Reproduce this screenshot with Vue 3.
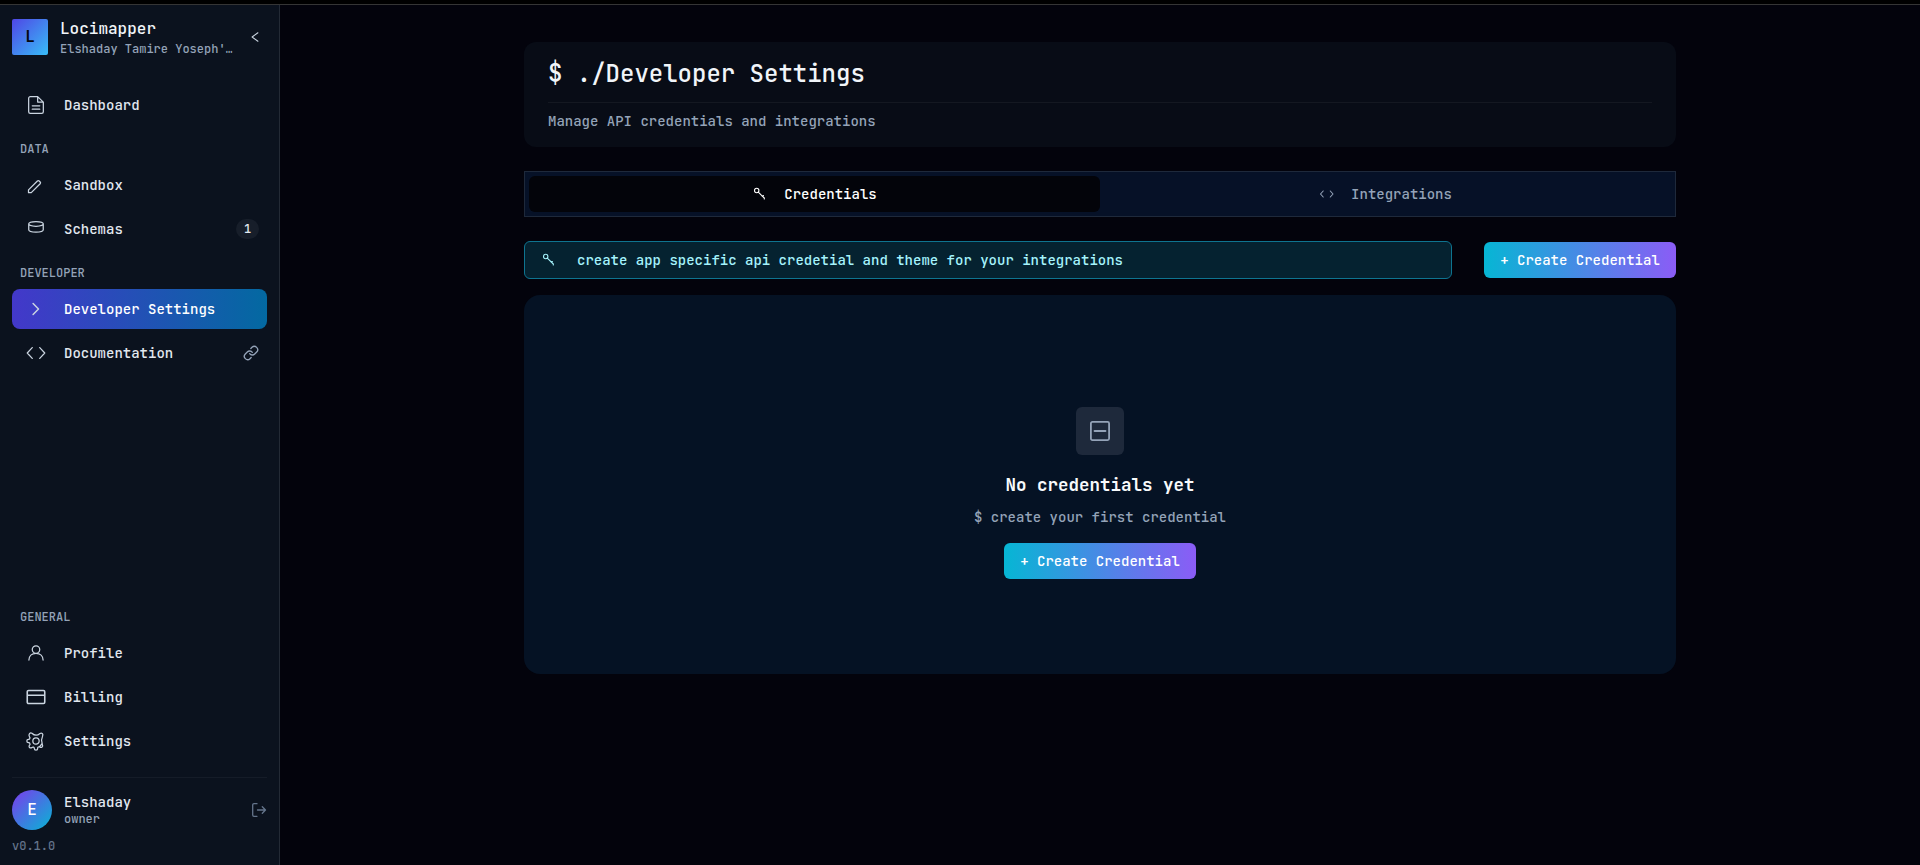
<script setup>
const sections = [
  { title: '', items: [{ icon: 'doc', label: 'Dashboard' }] },
  { title: 'DATA', items: [{ icon: 'pencil', label: 'Sandbox' }, { icon: 'db', label: 'Schemas', badge: '1' }] },
  { title: 'DEVELOPER', items: [{ icon: 'chev', label: 'Developer Settings', active: true }, { icon: 'code', label: 'Documentation', link: true }] },
  { title: 'GENERAL', bottom: true, items: [{ icon: 'user', label: 'Profile' }, { icon: 'card', label: 'Billing' }, { icon: 'gear', label: 'Settings' }] },
]
const icons = {
  doc: 'M14 2H5.200a2 2 0 0 0-2 2v16a2 2 0 0 0 2 2h13.600a2 2 0 0 0 2-2V8.500zM14 2v6.500h6.800M7.500 13h9M7.500 17h9',
  pencil: 'M3 21.200v-3.300L13.700 7.200a1.500 1.500 0 0 1 2.100 0l1.200 1.200a1.500 1.500 0 0 1 0 2.100L6.300 21.200z',
  db: 'M3.300 5.800c0-1.600 3.800-2.800 8.700-2.800s8.700 1.200 8.700 2.800-3.800 2.900-8.700 2.900-8.700-1.300-8.700-2.900zM3.300 5.800v7c0 1.600 3.800 2.900 8.700 2.900s8.700-1.300 8.700-2.900v-7',
  chev: 'M8.500 5.500 15 12l-6.500 6.500',
  code: 'M7.500 5.500 1.500 12l6 6.500M16.500 5.500l6 6.500-6 6.500',
  user: 'M16.500 7.800a4.500 4.500 0 1 1-9 0 4.500 4.500 0 0 1 9 0zM3.500 20.500c0-5 3.500-8.200 8.500-8.200s8.500 3.200 8.500 8.200',
  card: 'M3 4.200h18a1.500 1.500 0 0 1 1.500 1.500v12.600a1.500 1.500 0 0 1-1.500 1.500H3a1.500 1.500 0 0 1-1.500-1.500V5.700A1.500 1.500 0 0 1 3 4.200zM1.500 9.800h21',
  gear: 'M15.800 12a3.800 3.800 0 1 1-7.600 0 3.800 3.800 0 0 1 7.600 0zM19.400 15l-3 3.800a1.900 1.900 0 1 0 3.300-2zM16.400 19.200a1.650 1.650 0 0 0-2.400 1.700V21a2 2 0 1 1-4 0v-.09A1.650 1.650 0 0 0 9 19.400a1.650 1.650 0 0 0-1.820.33l-.06.06a2 2 0 1 1-2.830-2.830l.06-.06A1.650 1.650 0 0 0 4.680 15a1.650 1.650 0 0 0-1.510-1H3a2 2 0 1 1 0-4h.09A1.650 1.650 0 0 0 4.600 9a1.650 1.650 0 0 0-.33-1.820l-.06-.06C2.300 3.800 5.200 1.500 7.040 2.600l.06.06c2.900 2.800 6.900 2.700 9.720.3 2.100-1 4 .3 3.200 2.600l-.4 1.600c-1.500 2.900-1.500 5-.22 7.840',
}
</script>

<template>
  <div class="page">
    <div class="strip"></div>
    <div class="body">
      <aside class="side">
        <header class="brand">
          <div class="logo">L</div>
          <div class="brand-text">
            <div class="name">Locimapper</div>
            <div class="org">Elshaday Tamire Yoseph'…</div>
          </div>
          <svg class="collapse" viewBox="0 0 12 12"><path d="M8.900 1.800 3.100 6l5.800 4.200" /></svg>
        </header>
        <nav class="nav">
          <section v-for="s in sections" :key="s.title" :class="{ bottom: s.bottom }">
            <h4 v-if="s.title">{{ s.title }}</h4>
            <div class="items">
              <a v-for="i in s.items" :key="i.label" class="item" :class="{ active: i.active }">
                <svg class="ico" :class="i.icon" viewBox="0 0 24 24"><path :d="icons[i.icon]" /></svg>
                <span class="label">{{ i.label }}</span>
                <span v-if="i.badge" class="badge">{{ i.badge }}</span>
                <svg v-if="i.link" class="link" viewBox="0 0 24 24"><path d="M10 13a5 5 0 0 0 7.540.54l3-3a5 5 0 0 0-7.070-7.070l-1.720 1.710M14 11a5 5 0 0 0-7.540-.54l-3 3a5 5 0 0 0 7.070 7.070l1.710-1.710" /></svg>
              </a>
            </div>
          </section>
        </nav>
        <footer class="foot">
          <div class="account">
            <div class="avatar">E</div>
            <div class="who">
              <div class="person">Elshaday</div>
              <div class="role">owner</div>
            </div>
            <svg class="logout" viewBox="0 0 16 16"><path d="M6 1.700H3a1.300 1.300 0 0 0-1.300 1.300v10A1.300 1.300 0 0 0 3 14.300h3M6.500 8h8M11.300 4.800 14.500 8l-3.200 3.200" /></svg>
          </div>
          <div class="version">v0.1.0</div>
        </footer>
      </aside>
      <main class="main">
        <div class="content">
          <div class="head">
            <h1>$ ./Developer Settings</h1>
            <p>Manage API credentials and integrations</p>
          </div>
          <div class="tabs">
            <div class="tab on">
              <svg class="key" viewBox="0 0 16 16"><circle cx="4.700" cy="4.500" r="2.200" /><path d="m6.300 6.200 6 5.800v1M10.200 10.200l1.200-.6" /></svg>
              <span>Credentials</span>
            </div>
            <div class="tab">
              <svg class="key" viewBox="0 0 16 16"><path d="M4.200 5 1.500 8l2.700 3M11.300 5 14 8l-2.700 3" /></svg>
              <span>Integrations</span>
            </div>
          </div>
          <div class="actions">
            <div class="note">
              <svg class="key" viewBox="0 0 16 16"><circle cx="4.700" cy="4.500" r="2.200" /><path d="m6.300 6.200 6 5.800v1M10.200 10.200l1.200-.6" /></svg>
              <span>create app specific api credetial and theme for your integrations</span>
            </div>
            <button class="create">+ Create Credential</button>
          </div>
          <div class="empty">
            <div class="empty-icon">
              <svg viewBox="0 0 24 24"><rect x="2.900" y="2.900" width="18.200" height="18.200" rx="1.500" /><path d="M6.500 12h11" /></svg>
            </div>
            <h2>No credentials yet</h2>
            <p>$ create your first credential</p>
            <button class="create">+ Create Credential</button>
          </div>
        </div>
      </main>
    </div>
  </div>
</template>

<style>
html, body { margin: 0; background: #03030c; }
</style>

<style scoped>
* { box-sizing: border-box; }
.page {
  height: 100vh; display: flex; flex-direction: column; overflow: hidden;
  background: #03030c; color: #e2e8f0;
  font: 500 14px/20px "JetBrains Mono", "DejaVu Sans Mono", monospace;
}
h1, h2, h4, p { margin: 0; }
svg { flex: none; fill: none; stroke: currentColor; stroke-width: 1.500; stroke-linecap: round; stroke-linejoin: round; }
.strip { height: 5px; flex: none; background: #000; border-bottom: 1px solid #353535; }
.body { flex: 1; display: flex; min-height: 0; }
.side { width: 280px; flex: none; background: #0b121e; border-right: 1px solid #232a35; padding: 0 12px; display: flex; flex-direction: column; }
.brand { height: 64px; display: flex; align-items: center; gap: 12px; flex: none; }
.logo { width: 36px; height: 36px; border-radius: 2px; background: linear-gradient(135deg, #4f46e5, #38bdf8); color: #05070f; font-weight: 700; font-size: 16px; display: grid; place-items: center; }
.brand-text { flex: 1; min-width: 0; padding-top: 3px; }
.name { font-size: 16px; line-height: 20px; color: #f1f5f9; }
.org { font-size: 12px; line-height: 20px; color: #94a3b8; white-space: nowrap; }
.collapse { width: 12px; height: 12px; margin-right: 6px; stroke-width: 1.100; color: #cbd5e1; }
.nav { flex: 1; display: flex; flex-direction: column; padding: 16px 0; }
.bottom { margin-top: auto; }
h4 { font-size: 12px; line-height: 16px; font-weight: 500; color: #94a3b8; padding: 16px 8px 8px; }
.items { display: flex; flex-direction: column; gap: 4px; }
.item { height: 40px; border-radius: 8px; display: flex; align-items: center; padding: 0 8px 0 14px; }
.active { background: linear-gradient(90deg, #4338ca, #0369a1); color: #fff; }
.ico { width: 20px; height: 20px; margin-right: 18px; color: #cbd5e1; }
.ico.card { stroke-width: 1.900; }
.ico.chev { stroke-width: 1.800; }
.label { flex: 1; }
.badge { width: 23px; height: 20px; border-radius: 10px; background: #171e2a; font-size: 12px; display: grid; place-items: center; }
.link { width: 16px; height: 16px; color: #94a3b8; stroke-width: 2; }
.foot { flex: none; height: 88px; border-top: 1px solid #151c28; padding-top: 12px; }
.account { height: 40px; display: flex; align-items: center; gap: 12px; }
.avatar { width: 40px; height: 40px; border-radius: 50%; background: linear-gradient(135deg, #7c3aed, #06b6d4); color: #fff; display: grid; place-items: center; font-size: 16px; }
.who { flex: 1; }
.person { line-height: 18px; }
.role { font-size: 12px; line-height: 16px; color: #94a3b8; }
.logout { width: 16px; height: 16px; color: #64748b; stroke-width: 1.300; }
.version { font-size: 12px; line-height: 16px; color: #64748b; margin-top: 8px; }
.main { flex: 1; display: flex; justify-content: center; padding-top: 37px; }
.content { width: 1152px; }
.head { height: 105px; border-radius: 12px; background: #080c16; padding: 12px 24px 0; }
h1 { font-size: 24px; line-height: 40px; height: 49px; font-weight: 500; color: #f1f5f9; border-bottom: 1px solid #141821; }
.head p { line-height: 20px; margin-top: 8px; color: #94a3b8; }
.tabs { margin-top: 24px; height: 46px; border: 1px solid #1e293b; background: #061127; padding: 4px; display: flex; }
.tab { flex: 1; display: flex; align-items: center; justify-content: center; gap: 16px; border-radius: 6px; color: #94a3b8; }
.on { background: #03040a; color: #fff; }
.key { width: 16px; height: 16px; stroke-width: 1.100; }
.actions { margin-top: 24px; display: flex; align-items: center; gap: 32px; }
.note { flex: 1; height: 38px; border: 1px solid #0e7490; border-radius: 6px; background: #052230; color: #a5f3fc; display: flex; align-items: center; padding-left: 16px; gap: 20px; }
.create { width: 192px; height: 36px; border: 0; padding: 0; border-radius: 6px; background: linear-gradient(90deg, #06b6d4, #8b5cf6); color: #fff; font: inherit; }
.empty { margin-top: 16px; height: 379px; border-radius: 16px; background: #051224; padding-top: 112px; display: flex; flex-direction: column; align-items: center; }
.empty-icon { width: 48px; height: 48px; border-radius: 6px; background: #1e293b; color: #94a3b8; display: grid; place-items: center; }
.empty-icon svg { width: 24px; height: 24px; stroke-width: 1.800; }
h2 { font-size: 17.500px; line-height: 28px; margin-top: 16px; font-weight: 600; color: #f8fafc; }
.empty p { line-height: 20px; margin: 8px 0 16px; color: #94a3b8; }
</style>
